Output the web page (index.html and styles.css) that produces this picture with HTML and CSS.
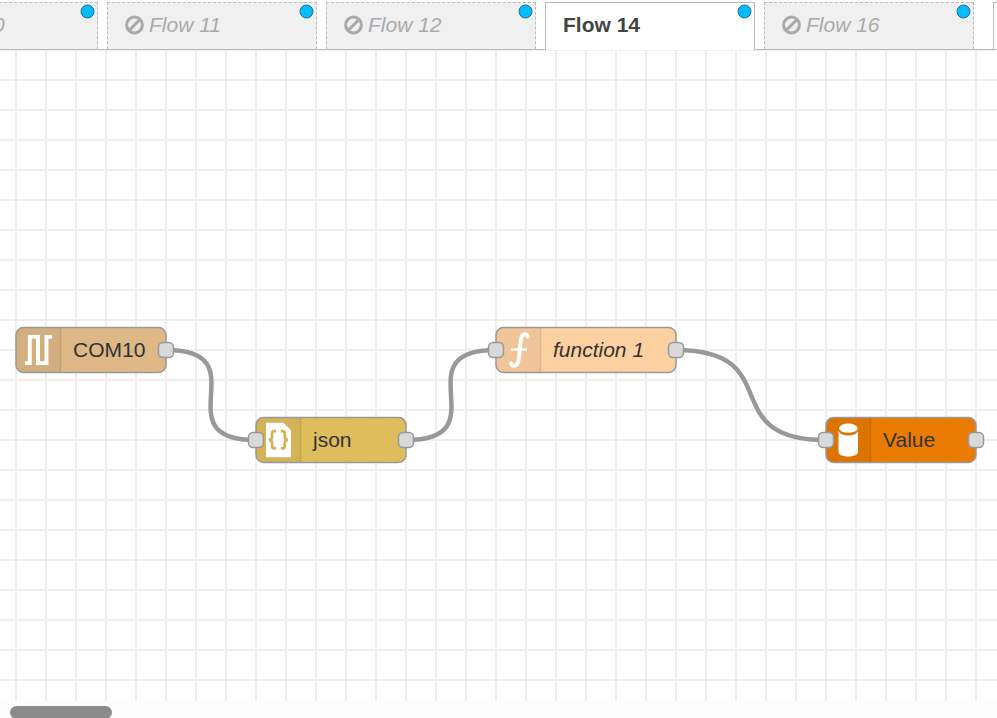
FILE: index.html
```html
<!DOCTYPE html>
<html lang="en">
<head>
<meta charset="utf-8">
<title>Flow 14</title>
<link rel="stylesheet" href="styles.css">
</head>
<body>
<svg class="defs" width="0" height="0"><defs>
<symbol id="ban" viewBox="0 0 20 20"><circle cx="9.5" cy="10" r="7.9"/><path d="M4.1 15.4 14.9 4.6"/></symbol>
</defs></svg>
<nav class="tabs">
  <div class="tab disabled first"><span>0</span><i class="dot"></i></div>
  <div class="tab disabled"><svg class="ban"><use href="#ban"/></svg><span>Flow 11</span><i class="dot"></i></div>
  <div class="tab disabled"><svg class="ban"><use href="#ban"/></svg><span>Flow 12</span><i class="dot"></i></div>
  <div class="tab active"><span>Flow 14</span><i class="dot"></i></div>
  <div class="tab disabled"><svg class="ban"><use href="#ban"/></svg><span>Flow 16</span><i class="dot"></i></div>
  <div class="tab plain"></div>
</nav>
<main class="workspace">
<svg class="canvas" viewBox="0 50 997 651" width="997" height="651">
  <defs>
    <pattern id="grid" width="30" height="30" patternUnits="userSpaceOnUse" x="15" y="49"><path class="grid" d="M0 0h30v2H0zM0 0h2v30H0z"/></pattern>
  </defs>
  <rect y="50" width="997" height="651" fill="url(#grid)"/>
  <g class="wires">
    <path d="M166 350C261.5 350 160.5 440 256 440"/>
    <path d="M406 440C501.5 440 400.5 350 496 350"/>
    <path d="M676 350C788.5 350 713.5 440 826 440"/>
  </g>
  <g transform="translate(16 327.5)">
    <rect class="body serial" width="150" height="45" rx="7.5"/>
    <path class="shade" d="M44.5 0V45H7.5A7.5 7.5 0 0 1 0 37.5V7.5A7.5 7.5 0 0 1 7.5 0z"/><path class="rule" d="M44.5 .7v43.6"/>
    <path class="pulse" d="M9 35.6h4.8V9.4H22v26.2h8.5V9.4H36"/>
    <text x="57" y="29.5">COM10</text>
    <rect class="outline" width="150" height="45" rx="7.5"/>
    <rect class="port" x="142.5" y="15" width="15" height="15" rx="4.5"/>
  </g>
  <g transform="translate(256 417.5)">
    <rect class="body json" width="150" height="45" rx="7.5"/>
    <path class="shade" d="M44.5 0V45H7.5A7.5 7.5 0 0 1 0 37.5V7.5A7.5 7.5 0 0 1 7.5 0z"/><path class="rule" d="M44.5 .7v43.6"/>
    <path class="white" d="M10 5.2h17.5l7.5 7.5v27H10z"/>
    <path class="braces" d="M20 13.700h-1.500q-2.500 0-2.500 2.500v3.200q0 2.900-3.200 2.900 3.200 0 3.200 2.900v3.200q0 2.500 2.500 2.500H20M24.800 13.700h1.500q2.500 0 2.500 2.500v3.200q0 2.900 3.200 2.900-3.200 0-3.200 2.900v3.200q0 2.500-2.500 2.500h-1.500"/>
    <text x="57" y="29.5">json</text>
    <rect class="outline" width="150" height="45" rx="7.5"/>
    <rect class="port" x="-7.5" y="15" width="15" height="15" rx="4.5"/>
    <rect class="port" x="142.5" y="15" width="15" height="15" rx="4.5"/>
  </g>
  <g transform="translate(496 327.5)">
    <rect class="body function" width="180" height="45" rx="7.5"/>
    <path class="shade" d="M44.5 0V45H7.5A7.5 7.5 0 0 1 0 37.5V7.5A7.5 7.5 0 0 1 7.5 0z"/><path class="rule" d="M44.5 .7v43.6"/>
    <path class="fn" d="M31.900 9.200C30.500 5.600 26 5.900 25 11.500C24 17.500 23.600 26 22.600 32.500C21.800 39 16.500 39.400 15 36"/><path class="fnbar" d="M15 22h16"/>
    <text class="italic" x="57" y="29.5">function 1</text>
    <rect class="outline" width="180" height="45" rx="7.5"/>
    <rect class="port" x="-7.5" y="15" width="15" height="15" rx="4.5"/>
    <rect class="port" x="172.5" y="15" width="15" height="15" rx="4.5"/>
  </g>
  <g transform="translate(826 417.5)">
    <rect class="body value" width="150" height="45" rx="7.5"/>
    <path class="shade" d="M44.5 0V45H7.5A7.5 7.5 0 0 1 0 37.5V7.5A7.5 7.5 0 0 1 7.5 0z"/><path class="rule" d="M44.5 .7v43.6"/>
    <ellipse class="white" cx="22.3" cy="10.7" rx="9.3" ry="4.6"/>
    <path class="white" d="M12.5 13.3C14 19.6 30.5 19.6 32 13.3V34.5C32 40.5 12.5 40.5 12.5 34.5z"/>
    <text x="57" y="29.5">Value</text>
    <rect class="outline" width="150" height="45" rx="7.5"/>
    <rect class="port" x="-7.5" y="15" width="15" height="15" rx="4.5"/>
    <rect class="port" x="142.5" y="15" width="15" height="15" rx="4.5"/>
  </g>
</svg>
</main>
<footer class="scroll"><div class="thumb"></div></footer>
</body>
</html>
```
FILE: styles.css
```css
* { box-sizing: border-box; }
body { margin: 0; height: 718px; overflow: hidden; display: flex; flex-direction: column; background: #fff; font-family: "Liberation Sans", Arial, sans-serif; font-size: 21px; }
.defs { display: none; }
.tabs { flex: none; height: 50px; padding-top: 2px; display: flex; gap: 9px; overflow: hidden; box-shadow: inset 0 -1px #bbb; }
.tab { position: relative; flex: none; width: 210px; height: 47px; padding: 0 0 3px 17px; display: flex; align-items: center; border: 1px solid #bbb; border-bottom: 0; background: #fff; color: #444; line-height: 24px; }
.tab.disabled { border-style: dashed; border-bottom: 0; background: #f0f0f0; color: #aaa; font-style: italic; }
.first { margin-left: -112px; }
.tab.first { padding-left: 104px; }
.tab.active { height: 48px; padding-bottom: 4px; }
.tab.active { font-weight: bold; }
.tab.plain { margin-left: 10px; }
.ban { width: 20px; height: 20px; margin-right: 4px; fill: none; stroke: #aaa; stroke-width: 3; }
.dot { position: absolute; top: 2px; right: 3px; width: 14px; height: 14px; border: 1px solid #1f6f96; border-radius: 50%; background: #00bcff; transform: translate(.5px, -.5px); }
.workspace { flex: none; height: 651px; }
.canvas { display: block; }
.grid { fill: #eee; }
.wires { fill: none; stroke: #999; stroke-width: 4.5; }
.serial { fill: #deb887; }
.json { fill: #debd5c; }
.function { fill: #fdd0a2; }
.value { fill: #e97b00; }
.shade { fill: #000; fill-opacity: .05; }
.rule { stroke: #000; stroke-opacity: .1; stroke-width: 1.5; }
.outline { fill: none; stroke: #999; stroke-width: 1.5; }
.port { fill: #d9d9d9; stroke: #999; stroke-width: 1.5; }
.canvas text { fill: #333; font-size: 21px; }
.canvas .italic { font-style: italic; }
.white { fill: #fff; }
.pulse { fill: none; stroke: #fff; stroke-width: 3.9; }
.braces { fill: none; stroke: #d3b357; stroke-width: 2.7; }
.fn { fill: none; stroke: #fff; stroke-width: 3.9; stroke-linecap: round; }
.fnbar { stroke: #fff; stroke-width: 2.4; }
.scroll { flex: 1; padding: 5px 10px 0; background: #fcfcfc; }
.thumb { width: 102px; height: 13px; border-radius: 6.5px; background: #8b8b8b; }
```
